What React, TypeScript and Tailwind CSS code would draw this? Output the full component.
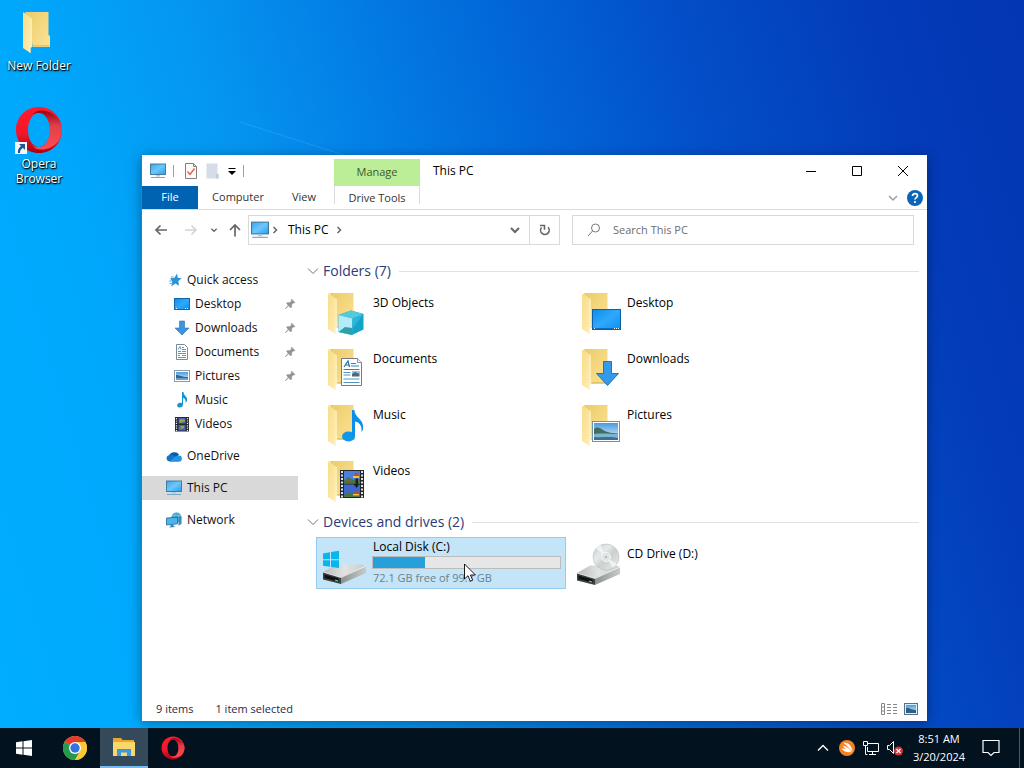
import React, { useState } from 'react'

type IconProps = { className?: string }

// gradients shared by all the icons below
const Gradients = () => (
  <svg className="absolute w-0 h-0" aria-hidden="true">
    <defs>
      <linearGradient id="folderFront" x1="0" y1="0" x2="1" y2="1">
        <stop offset="0" stopColor="#f8dc86" />
        <stop offset="1" stopColor="#feeeb8" />
      </linearGradient>
      <linearGradient id="folderBack" x1="0" y1="0" x2="1" y2="1">
        <stop offset="0" stopColor="#eccb6c" />
        <stop offset="1" stopColor="#fce494" />
      </linearGradient>
      <linearGradient id="screen" x1="0" y1="0" x2="1" y2="1">
        <stop offset="0" stopColor="#3ba5ee" />
        <stop offset="0.5" stopColor="#6cc8fb" />
        <stop offset="1" stopColor="#2a9be8" />
      </linearGradient>
      <linearGradient id="desk" x1="0" y1="0" x2="1" y2="1">
        <stop offset="0" stopColor="#0a8cec" />
        <stop offset="0.5" stopColor="#2fa8fa" />
        <stop offset="1" stopColor="#0a93f2" />
      </linearGradient>
      <linearGradient id="operaOuter" x1="0" y1="0" x2="0" y2="1">
        <stop offset="0" stopColor="#ff1b2d" />
        <stop offset="0.6" stopColor="#f0162a" />
        <stop offset="1" stopColor="#a70014" />
      </linearGradient>
      <linearGradient id="operaInner" x1="0" y1="0" x2="0" y2="1">
        <stop offset="0" stopColor="#9c0010" />
        <stop offset="0.4" stopColor="#e0404a" />
        <stop offset="1" stopColor="#ff4b52" />
      </linearGradient>
      <linearGradient id="driveTop" x1="0" y1="0" x2="1" y2="0">
        <stop offset="0" stopColor="#b9bcbc" />
        <stop offset="0.5" stopColor="#e2e3e3" />
        <stop offset="1" stopColor="#c9cbcb" />
      </linearGradient>
      <linearGradient id="driveSide" x1="0" y1="0" x2="1" y2="0">
        <stop offset="0" stopColor="#8b8e8e" />
        <stop offset="1" stopColor="#c8cbcb" />
      </linearGradient>
      <linearGradient id="disc" x1="0" y1="0" x2="1" y2="1">
        <stop offset="0" stopColor="#c2c8c8" />
        <stop offset="0.35" stopColor="#e6eaea" />
        <stop offset="0.55" stopColor="#c9d0cf" />
        <stop offset="0.8" stopColor="#dde2e1" />
        <stop offset="1" stopColor="#b4bbba" />
      </linearGradient>
      <linearGradient id="sky" x1="0" y1="0" x2="0" y2="1">
        <stop offset="0" stopColor="#4a9be0" />
        <stop offset="1" stopColor="#e3f2fb" />
      </linearGradient>
    </defs>
  </svg>
)

const FolderShape = () => (
  <>
    <path d="M10 5h23.500v23l1.500 1v11h-17z" fill="url(#folderBack)" />
    <path d="M17 38h17.500v1.500H17z" fill="#e2c369" />
    <path d="M8 5l9 6.500v28.500l-1.500 1v5L8 41z" fill="url(#folderFront)" />
    <path d="M16 11v29l-1 1v5" fill="none" stroke="#fdf3c9" strokeWidth="0.8" />
  </>
)

const BigIcon = ({ children }: { children?: React.ReactNode }) => (
  <svg viewBox="0 0 48 48" className="w-12 h-12 shrink-0" aria-hidden="true">
    {children}
  </svg>
)

const overlays: Record<string, React.ReactNode> = {
  objects: (
    <>
      <path d="M18.500 27L31 22.500 43.500 26v15.500L32 47l-13.500-3z" fill="#15a3c8" />
      <path d="M18.500 27L31 22.500 43.500 26l-11 4.500z" fill="#55c8dc" />
      <path d="M18.500 27l14 3.500L32 47l-13.500-3z" fill="#b3ebf7" />
      <path d="M18.500 44l6.500-5 7.300 1L32 47z" fill="#2f9fae" />
      <path d="M32.500 30.500l11-4.500L32.300 41z" fill="#27b7d8" />
    </>
  ),
  desktop: (
    <>
      <rect x="18.500" y="21.500" width="28" height="20" fill="url(#desk)" stroke="#0b60a8" />
      <path d="M19 40.500h27" stroke="#0a6cba" />
      <path d="M20 40.500h1M40 40.500h1M42 40.500h1M44 40.500h1" stroke="#fff" />
    </>
  ),
  documents: (
    <>
      <path d="M21.500 14.500h16l4 4v23h-20z" fill="#fff" stroke="#737b82" />
      <path d="M37.500 14.500v4h4" fill="#eef1f3" stroke="#737b82" strokeWidth="0.800" />
      <path d="M24 23l4-6 1.500 6M26 21h3" fill="none" stroke="#2273ae" strokeWidth="1.200" />
      <path d="M31 19.500h5M31 22h8M23.500 25.500h16" stroke="#1e88c8" />
      <path d="M23.500 28.500h7M23.500 31h7M23.500 35h16M23.500 38.500h16" stroke="#5294bd" />
      <rect x="32" y="27.500" width="7.500" height="5" fill="#526675" />
      <path d="M32 30l3-2 4.500 2v-2.500H32z" fill="#9cc8df" />
    </>
  ),
  downloads: (
    <path d="M29.500 17.500h8v12h7L33.500 41.500 22.500 29.500h7z" fill="#369aea" stroke="#2166a6" strokeWidth="0.900" />
  ),
  music: (
    <>
      <ellipse cx="28.500" cy="36.500" rx="6.500" ry="5" fill="#1496ec" />
      <path d="M32 10h2.500c0 8 10 9 8.500 19-.3 1.500-1 2.500-1.500 3 .5-5-1-9.500-6.500-10.500v15h-3z" fill="#0c8fe8" />
    </>
  ),
  pictures: (
    <>
      <rect x="18.500" y="21.500" width="27" height="20" fill="#fff" stroke="#7590a5" />
      <rect x="20" y="23" width="24" height="17" fill="url(#sky)" />
      <path d="M20 29c3-3 6-1 9 1s7 3 15 3.500V36H20z" fill="#3f6f5c" />
      <path d="M20 34c8-1 17 0 24 0v6H20z" fill="#7fb2d0" />
      <path d="M20 37c8 1 15-1 24 1v2H20z" fill="#3a6f95" />
    </>
  ),
  videos: (
    <>
      <rect x="20" y="14" width="24" height="28" fill="#23262b" />
      <rect x="24" y="15" width="16" height="12.500" fill="#4a80dc" />
      <rect x="24" y="28.500" width="16" height="12.500" fill="#3c68ca" />
      <path d="M24 25l4-4 5 3 7-1v4.500H24zM24 39l5-3 5 3 6-1v3H24z" fill="#47753c" />
      <path d="M34.500 17h4v3h-4zM27 23l3 1-2 2zM34.500 36h4v2h-4z" fill="#dd3d2b" />
      <path d="M33 20h6v2h-6zM33 38h6v1.500h-6z" fill="#f0c634" />
      <path d="M35.500 22.500h2.500v5.500h1.500l-3 4-3-4h2z" fill="#20221f" />
      <path d="M22 15v27M42 15v27" stroke="#dfe3e5" strokeWidth="2" strokeDasharray="2 1.500" />
    </>
  ),
}

const Drive = () => (
  <>
    <path d="M3 34l13-7.500h26l4 1.500-25 12z" fill="url(#driveTop)" />
    <path d="M20 39.500L46 28v7L21 46z" fill="url(#driveSide)" />
    <path d="M3 34l18 5.500V46L3 41.500z" fill="#3d4041" />
    <path d="M4.500 36.500l14 4v3l-14-3.500z" fill="#0f1112" />
    <path d="M15 42l3 1" stroke="#7bd7b8" />
    <path d="M3 34l18 5.500L46 28" fill="none" stroke="#f6f6f6" strokeWidth="0.800" />
  </>
)

const LocalDiskIcon = () => (
  <BigIcon>
    <Drive />
    <path d="M3 15.500l7-1.200v6.900H3zM11 14.100l8-1.300v8.400h-8zM3 22.300h7v6.500l-7-1zM11 22.300h8v7.700l-8-1.100z" fill="#08b5ec" />
  </BigIcon>
)

const CdDriveIcon = () => (
  <BigIcon>
    <Drive />
    <circle cx="32" cy="18" r="13" fill="url(#disc)" stroke="#b7bdbd" strokeWidth="0.600" />
    <path d="M32 18L22 9.500a13 13 0 014.500-3.500zM32 18l11 7a13 13 0 01-4 4z" fill="#f5f8f8" opacity="0.800" />
    <circle cx="32" cy="18" r="4.500" fill="#dce3e2" stroke="#f8fafa" />
    <circle cx="32" cy="18" r="2" fill="#b9c1c0" stroke="#fff" strokeWidth="0.600" />
  </BigIcon>
)

const Opera = ({ className }: IconProps) => (
  <svg viewBox="0 0 48 48" className={className} aria-hidden="true">
    <path
      d="M24 1C11 1 1 11 1 24s10 23 23 23 23-10 23-23S37 1 24 1zm0 6c6 0 11 7 11 17s-5 17-11 17-11-7-11-17S18 7 24 7z"
      fill="url(#operaOuter)"
      fillRule="evenodd"
    />
    <path
      d="M17 9c2.500-3 5-4.500 9-4.500C37 5 47 12 47 24s-10 19.500-21 19.500c-4 0-6.500-1.500-9-4.500 2 1.500 4.500 2.500 7 2 6 0 11-7 11-17S30 7 24 7c-2.500 0-5 .5-7 2z"
      fill="url(#operaInner)"
    />
  </svg>
)

const MonitorIcon = ({ className = 'w-4 h-4' }: IconProps) => (
  <svg viewBox="0 0 16 16" className={`${className} shrink-0`} aria-hidden="true">
    <rect x="0.500" y="1" width="15" height="10.500" fill="url(#screen)" stroke="#3a7397" strokeWidth="0.900" />
    <path d="M6 12h4v1.500H6z" fill="#a9cde3" />
    <path d="M1 14.500h14" stroke="#79a6c0" />
  </svg>
)

const Chevron = ({ d, className, width = 1.5 }: { d: string; className?: string; width?: number }) => (
  <svg viewBox="0 0 12 12" className={className} fill="none" stroke="currentColor" strokeWidth={width} aria-hidden="true">
    <path d={d} />
  </svg>
)
const DOWN = 'M2 4l4 4 4-4'
const RIGHT = 'M4.500 3l3 3-3 3'

const Small = ({ children }: { children: React.ReactNode }) => (
  <svg viewBox="0 0 16 16" className="w-4 h-4 shrink-0" aria-hidden="true">
    {children}
  </svg>
)

const smallIcons: Record<string, React.ReactNode> = {
  quick: (
    <Small>
      <path d="M11 1.500l.8 4.300 4 .4-3.500 2.700.7 4.800-3.700-2.200-4 2.900 1-4.900L4 6.300l4.300-.3z" fill="#2b95d4" />
      <path d="M3 9h3M3.500 11.500h3M5 5h3" stroke="#5db8e6" />
    </Small>
  ),
  desktop: (
    <Small>
      <rect x="0.500" y="2.500" width="15" height="11" fill="url(#desk)" stroke="#0d67ac" />
      <path d="M2 12.500h1M11 12.500h1M13 12.500h1" stroke="#fff" />
    </Small>
  ),
  downloads: (
    <Small>
      <path d="M5.500 1h5v7h4.500L8 15 1 8h4.500z" fill="#3f93e0" stroke="#2c70b2" strokeWidth="0.600" />
    </Small>
  ),
  documents: (
    <Small>
      <path d="M2.500.5h8l3 3v12h-11z" fill="#fff" stroke="#7b8b96" />
      <path d="M4 5.500l2-3 1 3M8 3.500h2M8 5.500h4M4 7.500h3M8 7.500h4M4 9.500h8M4 11.500h2M8 11.500h4M4 13.500h8" fill="none" stroke="#3f8dbd" strokeWidth="0.900" />
    </Small>
  ),
  pictures: (
    <Small>
      <rect x="0.500" y="2.500" width="15" height="11" fill="#fff" stroke="#8b9aa5" />
      <rect x="2" y="4" width="12" height="8" fill="url(#sky)" />
      <path d="M2 7c4 0 5 2 12 2v1.500H2z" fill="#34659a" />
      <path d="M2 10h12v2H2z" fill="#6b9fbc" />
    </Small>
  ),
  music: (
    <Small>
      <path d="M8 0h1.500c0 4 4.500 4 3.500 9l-1.500 2c.5-3-.5-4.500-2.500-5v6.500C9 14.500 7.500 16 5 15.500S2.500 12 5 11c1-.4 2-.3 3 0z" fill="#1496d6" />
    </Small>
  ),
  videos: (
    <Small>
      <rect x="1" y="1" width="14" height="14.500" fill="#26282c" />
      <path d="M4.500 2h7v5.500h-7zM4.500 9h7v5.500h-7z" fill="#4963c8" />
      <path d="M5 5l2-2 4 1v1.500L6 7zM7 10h3v2l-4 1z" fill="#94a83a" />
      <path d="M2.500 2v13M13.500 2v13" stroke="#e6e8e9" strokeWidth="1.200" strokeDasharray="1.200 1.200" />
    </Small>
  ),
  onedrive: (
    <Small>
      <path d="M3 8a5.500 5 0 0110-1.500L9 11 4 12z" fill="#0c59a4" />
      <path d="M3.500 13.500a3.500 3.300 0 010-6.500c2-.8 4 0 5.500 1l4 5.500z" fill="#1272cc" />
      <path d="M4 13.500C6 11.500 9 7 13 7.500a3 3 0 01-.3 6z" fill="#2493e4" />
    </Small>
  ),
  pc: <MonitorIcon />,
  network: (
    <Small>
      <circle cx="10.500" cy="5.500" r="5" fill="#3e9dc5" />
      <path d="M6 3.500h9M6 7.500h9M10.500.5c-3 3-3 7 0 10M10.500.5c3 3 3 7 0 10" fill="none" stroke="#8acce5" strokeWidth="0.700" />
      <path d="M.5 6l11-.8v6.600l-11 1.200z" fill="#4bb3ee" stroke="#226a96" strokeWidth="0.800" />
      <path d="M4.500 12.800l3-.3.200 1.800 2 .7-7 .5 1.800-1z" fill="#3b86ae" />
      <path d="M12.500 4.500l3 .5v7l-3 1.500z" fill="#3a8bb8" />
    </Small>
  ),
}

const Pin = () => (
  <svg viewBox="0 0 12 12" className="w-3 h-3 shrink-0" aria-hidden="true">
    <path d="M7.500 1L11 4.500l-1 .5-1 0-1.500 2 .3 2-1 1L2.500 5.500l1-1 2 .2L7.500 3zM4.500 7L1 11l4-3.500z" fill="#8d949a" stroke="#8d949a" strokeWidth="0.500" />
  </svg>
)

const quickItems = [
  { name: 'Desktop', icon: 'desktop', pinned: true },
  { name: 'Downloads', icon: 'downloads', pinned: true },
  { name: 'Documents', icon: 'documents', pinned: true },
  { name: 'Pictures', icon: 'pictures', pinned: true },
  { name: 'Music', icon: 'music', pinned: false },
  { name: 'Videos', icon: 'videos', pinned: false },
]

const folders = [
  { name: '3D Objects', icon: 'objects' },
  { name: 'Desktop', icon: 'desktop' },
  { name: 'Documents', icon: 'documents' },
  { name: 'Downloads', icon: 'downloads' },
  { name: 'Music', icon: 'music' },
  { name: 'Pictures', icon: 'pictures' },
  { name: 'Videos', icon: 'videos' },
]

const localDisk = { used: 27.6, total: 99.7 }

const RootItem = ({ name, icon, active = false }: { name: string; icon: string; active?: boolean }) => (
  <button type="button" className={`flex items-center gap-[5px] w-full h-6 pl-6 ${active ? 'bg-[#d9d9d9]' : ''}`}>
    {smallIcons[icon]}
    {name}
  </button>
)

function TitleBar() {
  return (
    <header className="flex h-[31px] pr-px">
      <div className="flex items-center w-48 pl-2">
        <MonitorIcon />
        <span className="w-px h-3 ml-[7px] bg-gray-400" />
        <button type="button" aria-label="Properties" className="ml-[9px]">
          <svg viewBox="0 0 16 16" className="w-4 h-4">
            <path d="M2.500.5h8l3 3v12h-11z" fill="#fdfaf8" stroke="#85807e" />
            <path d="M10.500.5v3h3" fill="none" stroke="#85807e" />
            <path d="M4.500 8.500l2.500 3 4.500-6" fill="none" stroke="#e05a48" strokeWidth="1.300" />
          </svg>
        </button>
        <button type="button" aria-label="New folder" className="ml-1.5">
          <svg viewBox="0 0 16 16" className="w-4 h-4">
            <path d="M1.500 0.500h11v10l1 1v4h-12z" fill="#d5dde8" />
            <path d="M11 11h2.500v4.500H11z" fill="#c1ccda" />
          </svg>
        </button>
        <button type="button" aria-label="Customize toolbar" className="ml-[7px]">
          <svg viewBox="0 0 8 8" className="w-2 h-2">
            <path d="M0.500 1.500h7" stroke="#000" />
            <path d="M0 4h8L4 8z" fill="#000" />
          </svg>
        </button>
        <span className="w-px h-3 ml-[7px] bg-gray-400" />
      </div>
      <div className="flex items-center justify-center w-[86px] h-[27px] mt-1 bg-[#bcee98] text-[11px] text-[#3b5a2b]">Manage</div>
      <h1 className="flex-1 pl-[13px] leading-[31px] text-black">This PC</h1>
      <div className="flex">
        <button type="button" aria-label="Minimize" className="flex items-center justify-center w-[46px]">
          <svg viewBox="0 0 10 10" className="w-2.5 h-2.5">
            <path d="M0 5.500h10" stroke="#000" />
          </svg>
        </button>
        <button type="button" aria-label="Maximize" className="flex items-center justify-center w-[46px]">
          <svg viewBox="0 0 10 10" className="w-2.5 h-2.5">
            <path d="M0.500 0.500h9v9h-9z" fill="none" stroke="#000" />
          </svg>
        </button>
        <button type="button" aria-label="Close" className="flex items-center justify-center w-[46px]">
          <svg viewBox="0 0 10 10" className="w-2.5 h-2.5">
            <path d="M0 0l10 10M10 0L0 10" stroke="#000" />
          </svg>
        </button>
      </div>
    </header>
  )
}

function Ribbon() {
  return (
    <div className="flex h-6 border-b border-[#dadbdc] text-[11px] text-[#333]">
      <button type="button" className="w-14 h-[23px] bg-[#0063b1] text-white">
        File
      </button>
      <button type="button" className="w-20">
        Computer
      </button>
      <button type="button" className="w-14 pr-1">
        View
      </button>
      <button type="button" className="w-[86px] h-[18px] border-x border-[#dadbdc] leading-6">
        Drive Tools
      </button>
      <div className="flex items-center gap-2 ml-auto pr-1">
        <button type="button" aria-label="Expand the ribbon">
          <Chevron d={DOWN} className="w-3 h-3 text-gray-400" />
        </button>
        <button type="button" aria-label="Help">
          <svg viewBox="0 0 16 16" className="w-4 h-4">
            <circle cx="8" cy="8" r="8" fill="#0b64b8" />
            <path d="M5.500 6c0-3.200 5-3 5-.2C10.500 7.500 8 7.700 8 9.500" fill="none" stroke="#fff" strokeWidth="1.700" />
            <circle cx="8" cy="12" r="1.100" fill="#fff" />
          </svg>
        </button>
      </div>
    </div>
  )
}

function AddressRow() {
  const [search, setSearch] = useState('')

  return (
    <div className="flex items-center h-10 pl-1 pr-[13px] text-[#666]">
      <button type="button" aria-label="Back" className="flex justify-center w-[30px]">
        <svg viewBox="0 0 14 14" className="w-3.5 h-3.5" fill="none" stroke="#666" strokeWidth="1.700">
          <path d="M13 7H2M6.500 2.500L2 7l4.500 4.500" />
        </svg>
      </button>
      <button type="button" aria-label="Forward" className="flex justify-center w-[30px]">
        <svg viewBox="0 0 14 14" className="w-3.5 h-3.5" fill="none" stroke="#d2d2d2" strokeWidth="1.500">
          <path d="M1 7h11M7.500 2.500L12 7l-4.500 4.500" />
        </svg>
      </button>
      <button type="button" aria-label="Recent locations" className="flex justify-center w-4">
        <Chevron d={DOWN} className="w-2 h-2" width={2} />
      </button>
      <button type="button" aria-label="Up" className="flex justify-center w-[26px]">
        <svg viewBox="0 0 14 14" className="w-3.5 h-3.5" fill="none" stroke="#666" strokeWidth="1.700">
          <path d="M7 13.500V2M2 7l5-5 5 5" />
        </svg>
      </button>
      <div className="flex flex-1 h-[30px] border border-[#d9d9d9]">
        <div className="flex flex-1 items-center pl-0.5">
          <MonitorIcon className="w-[18px] h-[18px]" />
          <Chevron d={RIGHT} className="w-3 h-3" />
          <button type="button" className="ml-[7px] mr-1 text-black">
            This PC
          </button>
          <Chevron d={RIGHT} className="w-3 h-3" />
          <button type="button" aria-label="Previous locations" className="ml-auto mr-2">
            <Chevron d={DOWN} className="w-3 h-3" width={2} />
          </button>
        </div>
        <button type="button" aria-label="Refresh" className="flex items-center justify-center w-[30px] border-l border-[#d9d9d9]">
          <svg viewBox="0 0 14 14" className="w-3.5 h-3.5" fill="none" stroke="#666" strokeWidth="1.600">
            <path d="M10 4.200a4.300 4.300 0 11-6.500.3M2 2.500h4.500v4.300" />
          </svg>
        </button>
      </div>
      <label className="flex items-center w-[342px] h-[30px] ml-3 pl-3.5 border border-[#d9d9d9]">
        <svg viewBox="0 0 14 14" className="w-3.5 h-3.5" fill="none" stroke="#777">
          <circle cx="8.500" cy="5" r="4" />
          <path d="M5.500 8L1 13" />
        </svg>
        <input
          type="text"
          aria-label="Search This PC"
          className="flex-1 min-w-0 ml-3 text-[11px] outline-none placeholder:text-[#6d6d6d]"
          placeholder="Search This PC"
          value={search}
          onChange={(e) => setSearch(e.target.value)}
        />
      </label>
    </div>
  )
}

function Sidebar() {
  return (
    <nav className="w-[156px] shrink-0 pt-[18px] text-[#111]">
      <RootItem name="Quick access" icon="quick" />
      {quickItems.map((item) => (
        <button type="button" key={item.name} className="flex items-center gap-[5px] w-full h-6 pl-8 pr-0.5">
          {smallIcons[item.icon]}
          <span className="flex-1 text-left">{item.name}</span>
          {item.pinned && <Pin />}
        </button>
      ))}
      <div className="flex flex-col gap-2 mt-2">
        <RootItem name="OneDrive" icon="onedrive" />
        <RootItem name="This PC" icon="pc" active />
        <RootItem name="Network" icon="network" />
      </div>
    </nav>
  )
}

const GroupTitle = ({ children }: { children: React.ReactNode }) => (
  <h2 className="flex items-center h-5 mb-[5px] text-sm leading-5 text-[#2b3a78]">
    <Chevron d="M1 3.500l5 5 5-5" className="w-3 h-3 mr-1 text-gray-500" width={1} />
    {children}
    <span className="flex-1 h-px ml-2 bg-[#e2e2e2]" />
  </h2>
)

function Content() {
  const usedPercent = (localDisk.used / localDisk.total) * 100

  return (
    <main className="flex-1 pt-[11px] pl-[9px] pr-2">
      <section>
        <GroupTitle>Folders (7)</GroupTitle>
        <div className="grid grid-cols-[repeat(auto-fill,250px)] gap-1 pl-[9px]">
          {folders.map((folder) => (
            <button type="button" key={folder.name} className="flex gap-[5px] h-[52px] pl-1 pt-0.5 text-left">
              <BigIcon>
                <FolderShape />
                {overlays[folder.icon]}
              </BigIcon>
              <span className="pt-[7px]">{folder.name}</span>
            </button>
          ))}
        </div>
      </section>
      <section className="mt-1.5">
        <GroupTitle>Devices and drives (2)</GroupTitle>
        <div className="grid grid-cols-[repeat(auto-fill,250px)] gap-1 pl-[9px]">
          <button type="button" className="flex gap-1 h-[52px] pl-[3px] pr-1 border border-[#94cbee] bg-[#c4e4f8] text-left">
            <LocalDiskIcon />
            <span className="flex-1">
              <span className="block h-[18px] pl-px leading-[18px]">Local Disk (C:)</span>
              <span className="block h-[13px] border border-[#bcbcbc] bg-[#e6e6e6]">
                <span className="block h-full bg-[#26a0da]" style={{ width: `${usedPercent}%` }} />
              </span>
              <span className="block pl-px text-[11px] leading-[18px] text-[#6d7f8c]">72.1 GB free of 99.7 GB</span>
            </span>
          </button>
          <button type="button" className="flex gap-[5px] h-[52px] pl-1 pt-0.5 text-left">
            <CdDriveIcon />
            <span className="pt-[7px]">CD Drive (D:)</span>
          </button>
        </div>
      </section>
    </main>
  )
}

function StatusBar() {
  return (
    <footer className="flex items-center h-6 pl-3.5 pr-[9px] text-[11px] text-[#1e2a4a]">
      <span>9 items</span>
      <span className="ml-[22px]">1 item selected</span>
      <button type="button" aria-label="Details view" className="ml-auto">
        <svg viewBox="0 0 16 14" className="w-4 h-3.5" fill="none" stroke="#888">
          <path d="M0.500 1.500h3v11h-3zM0.500 5h3M0.500 9h3M6 2.500h4M12 2.500h4M6 5.500h4M12 5.500h4M6 8.500h4M12 8.500h4M6 11.500h4M12 11.500h4" />
        </svg>
      </button>
      <button type="button" aria-label="Large icons view" className="ml-[7px]">
        <svg viewBox="0 0 14 12" className="w-3.5 h-3">
          <rect x="0.500" y="0.500" width="13" height="11" fill="#d9f0fc" stroke="#5c7180" />
          <rect x="2" y="2" width="10" height="8" fill="url(#sky)" />
          <path d="M2 5c3-1 4 2 10 2v3H2z" fill="#2e5f84" />
        </svg>
      </button>
    </footer>
  )
}

function Taskbar() {
  return (
    <footer className="relative flex h-10 gap-px bg-[#02121f] text-white">
      <button type="button" aria-label="Start" className="flex items-center justify-center w-[50px] pr-0.5">
        <svg viewBox="0 0 16 16" className="w-4 h-4" fill="#fff">
          <path d="M0 2.200l6.500-.9v6.200H0zM7.500 1.200L16 0v7.500H7.500zM0 8.500h6.500v6.200L0 13.800zM7.500 8.500H16V16l-8.500-1.200z" />
        </svg>
      </button>
      <button type="button" aria-label="Chrome" className="flex items-center justify-center w-12">
        <svg viewBox="0 0 24 24" className="w-6 h-6">
          <circle cx="12" cy="12" r="12" fill="#fcc934" />
          <path d="M12 12L1.600 6A12 12 0 0122.400 6z" fill="#e33b2e" />
          <path d="M1.600 6a12 12 0 0010.400 18l5.200-9z" fill="#229b51" />
          <path d="M12 24A12 12 0 0022.400 6H12l5.200 9z" fill="#fcc934" />
          <circle cx="12" cy="12" r="6" fill="#fff" />
          <circle cx="12" cy="12" r="4.700" fill="#3474e0" />
        </svg>
      </button>
      <button type="button" aria-label="File Explorer" className="flex items-center justify-center w-12 border-b-2 border-[#76b9ed] bg-[#34495a]">
        <svg viewBox="0 0 24 20" className="w-6 h-5">
          <path d="M1 1h8l1.500 2H22v15H1z" fill="#e6a92d" />
          <path d="M1 5h22v14H1z" fill="#fbd768" />
          <path d="M5 19v-7h14v7h-4v-3.500H9V19z" fill="#3998df" />
        </svg>
      </button>
      <button type="button" aria-label="Opera" className="flex items-center justify-center w-12">
        <Opera className="w-6 h-6" />
      </button>
      <div className="flex ml-auto">
        <button type="button" aria-label="Show hidden icons" className="flex items-center justify-center w-6">
          <Chevron d="M1 8.500l5-5 5 5" className="w-3 h-3" width={1.3} />
        </button>
        <button type="button" aria-label="Avast" className="flex items-center justify-center w-6">
          <svg viewBox="0 0 16 16" className="w-4 h-4">
            <circle cx="8" cy="8" r="8" fill="#f58220" />
            <path d="M4 2.500c4 0 8 5 9.500 9.500-2-3-6-6.500-9.500-9.500z" fill="#fff" />
            <path d="M6.500 2.500c4 1 6.500 4.500 7 9C11 7.500 9 5 6.500 2.500zM2.500 8.500c3-.5 7 .5 10 3.500-4 1-8-.5-10-3.500z" fill="#fff" />
            <path d="M3.500 5.500c3 .5 7 3 9 6-3.500-1-7-3-9-6z" fill="#fff" />
          </svg>
        </button>
        <button type="button" aria-label="Network" className="flex items-center justify-center w-6">
          <svg viewBox="0 0 16 14" className="w-4 h-3.5" fill="none" stroke="#fff">
            <path d="M5 2.500h10.500v8H4.500V6M9.500 10.500v3M6 13.500h7M0.500 0.500h4v4h-4zM2.500 5v8.500h2" />
          </svg>
        </button>
        <button type="button" aria-label="Volume muted" className="flex items-center justify-center w-6">
          <svg viewBox="0 0 16 16" className="w-4 h-4">
            <path d="M.5 5.500h2l4-4v12l-4-4h-2z" fill="none" stroke="#fff" />
            <circle cx="11.500" cy="11" r="4.500" fill="#d13438" />
            <path d="M9.500 9l4 4M13.500 9l-4 4" stroke="#fff" strokeWidth="1.200" />
          </svg>
        </button>
        <button type="button" className="w-16 text-[11px] leading-[18px]">
          8:51 AM
          <br />
          3/20/2024
        </button>
        <button type="button" aria-label="Notifications" className="flex items-center justify-center w-10">
          <svg viewBox="0 0 18 18" className="w-[18px] h-[18px]" fill="none" stroke="#fff" strokeWidth="1.200">
            <path d="M1 1.500h16v12h-5l-3 3-3-3H1z" />
          </svg>
        </button>
        <button type="button" aria-label="Show desktop" className="w-[5px] ml-2 border-l border-[#4b5966]" />
      </div>
    </footer>
  )
}

export default function App() {
  return (
    <div className="flex flex-col min-h-screen overflow-hidden font-['Open_Sans','Noto_Sans',sans-serif] text-xs">
      <Gradients />
      <div className="relative flex-1 bg-[linear-gradient(74deg,#00adff_0%,#00a8fc_18%,#0596f0_32%,#0270de_52%,#0350ca_70%,#033bb8_88%,#0336b2_100%)]">
        <svg viewBox="0 0 1024 728" preserveAspectRatio="none" className="absolute inset-0 w-full h-full" aria-hidden="true">
          <path d="M240 122L350 157" stroke="#5fc0ff" strokeWidth="0.800" opacity="0.350" />
        </svg>

        <div className="relative flex flex-col w-[78px] text-white leading-[15px]">
          <button type="button" className="flex flex-col items-center h-[98px] pt-2 gap-0.5 [text-shadow:0_1px_2px_#000,1px_1px_1px_#000]">
            <BigIcon>
              <g transform="translate(0 -1)">
                <FolderShape />
              </g>
            </BigIcon>
            New Folder
          </button>
          <button type="button" className="flex flex-col items-center h-[98px] pt-2 gap-0.5 [text-shadow:0_1px_2px_#000,1px_1px_1px_#000]">
            <span className="relative">
              <Opera className="w-12 h-12" />
              <svg viewBox="0 0 12 12" className="absolute left-0 bottom-0 w-3 h-3" aria-hidden="true">
                <path d="M0 0h12v12H0z" fill="#f4f7fa" />
                <path d="M4 2h6v6L8 6c-2 1-3 2.500-3 5H3c-.5-3 .5-5 3-7z" fill="#23588f" />
              </svg>
            </span>
            <span>
              Opera
              <br />
              Browser
            </span>
          </button>
        </div>

        <div className="absolute left-[141px] right-[97px] top-[155px] bottom-[7px] flex flex-col border-l border-[#1883d7] bg-white text-black shadow-[0_2px_12px_rgba(0,0,0,0.35)]">
          <TitleBar />
          <Ribbon />
          <AddressRow />
          <div className="flex flex-1">
            <Sidebar />
            <Content />
          </div>
          <StatusBar />
        </div>

        <svg viewBox="0 0 12 19" className="absolute left-[464px] top-[563px] w-3 h-[19px]" aria-hidden="true">
          <path d="M.5 1v15l3.500-3.300 2.300 5.500 2.400-1L6.400 12h5z" fill="#fff" stroke="#000" strokeWidth="0.900" />
        </svg>
      </div>
      <Taskbar />
    </div>
  )
}
